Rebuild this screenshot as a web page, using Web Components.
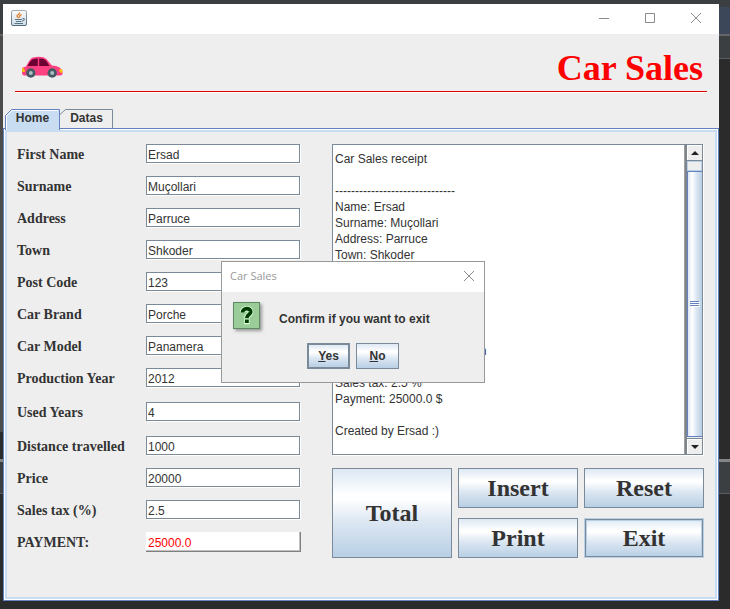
<!DOCTYPE html>
<html lang="en">
<head>
<meta charset="utf-8">
<title>Car Sales</title>
<style>
html,body{margin:0;height:100%}
body{background:#2b2b2b;font-family:"Liberation Sans",Arial,sans-serif;font-size:12px;color:#333}
</style>
</head>
<body>
<car-desktop></car-desktop>
<script>
const define=(name,html,init)=>customElements.define(name,class extends HTMLElement{
  constructor(){
    super();
    this.attachShadow({mode:'open'}).innerHTML='<style>*,:host{box-sizing:border-box}</style>'+html;
  }
  connectedCallback(){ if(init&&!this.ready){this.ready=true;init(this,this.shadowRoot)} }
});

define('form-field',`
<style>
:host{display:grid;grid-template-columns:129px minmax(0,1fr);align-items:start;height:20px}
label{font:bold 14px/22px "Liberation Serif","Times New Roman",serif;color:#333;white-space:nowrap}
input{width:100%;height:19px;margin:0;padding:2px 1px 0;border:1px solid #7a8a99;border-radius:0;outline:0;background:#fff;color:#333;font:12px/14px "Liberation Sans",Arial,sans-serif;box-shadow:1px 1px #fff}
:host([raised]) input{height:20px;color:#f00;border-width:0 1px 1px 0;border-color:#808080;padding:2px 2px 0;box-shadow:inset -1px -1px #c0c0c0}
</style>
<label for="i"></label><input id="i" type="text">`,(h,r)=>{
  r.querySelector('label').textContent=h.getAttribute('label');
  r.querySelector('input').value=h.getAttribute('value');
});

define('metal-button',`
<style>
:host{display:block}
button{width:100%;height:100%;margin:0;padding:0;border:1px solid #7a8a99;border-radius:0;background:linear-gradient(#dde8f3 0,#fff 30%,#fff 34%,#dce7f2 60%,#b8cfe5 100%);color:#333;font:bold 24px/30px "Liberation Serif","Times New Roman",serif}
:host([focused]) button{border:1px solid #b8cfe5;box-shadow:inset 0 0 0 1px #7a8a99,inset 0 0 0 2px #b8cfe5}
:host([small]) button{font:bold 12px/14px "Liberation Sans",Arial,sans-serif}
:host([small][default]) button{border-width:2px}
</style>
<button type="button"><slot></slot></button>`);

define('title-bar',`
<style>
:host{display:flex;align-items:center;justify-content:space-between;height:30px;flex:none;background:#fff;padding:0 15px 2px 8px}
.c{display:flex;gap:30px}
button{border:0;padding:0;margin:0;background:none;width:16px;height:16px}
svg{display:block}
.c svg{fill:none;stroke:#8b8b8b}
</style>
<svg width="16" height="16" viewBox="0 0 16 16" aria-hidden="true">
<defs><linearGradient id="g" x2="0" y2="1"><stop stop-color="#fafafa"/><stop offset="1" stop-color="#cfdde5"/></linearGradient><linearGradient id="b" x2="0" y2="1"><stop stop-color="#a2adb4"/><stop offset="1" stop-color="#506a7d"/></linearGradient></defs>
<rect x=".5" y=".5" width="15" height="15" rx="1.5" fill="url(#g)" stroke="url(#b)"/>
<path d="M8.500 2.500c1 1.600-2.500 2-2.500 3.500 0 1 1.200 1.200 1.400 2.200M10.500 4.500C7.500 6 8.500 6.500 8.800 7.700" fill="none" stroke="#e57b25" stroke-width="1.300"/>
<path d="M4 9.500h7M5 11.500h5.500M11.500 8.500c2.500-.4 2.500 2.200-.5 2.500M3.500 13.500h8.500" fill="none" stroke="#577387" stroke-width="1.100"/>
</svg>
<div class="c">
<button type="button" aria-label="Minimize"><svg width="16" height="16"><path d="M3 8.500h10"/></svg></button>
<button type="button" aria-label="Maximize"><svg width="16" height="16"><path d="M3.500 3.500h9v9h-9z"/></svg></button>
<button type="button" aria-label="Close"><svg width="16" height="16"><path d="M3 3l10 10M13 3L3 13"/></svg></button>
</div>`);

define('app-header',`
<style>
:host{display:block;flex:none;padding:8px 12px 0 12px}
div{display:flex;justify-content:space-between;align-items:center;height:49px;padding:0 4px 0 6px}
h1{margin:0;padding-top:4px;font:bold 36px/49px "Liberation Serif","Times New Roman",serif;color:#f00}
hr{margin:0;border:0;height:2px;background:linear-gradient(#e00000 50%,#fff 50%)}
svg{display:block}
</style>
<div>
<svg width="42" height="42" viewBox="0 3 42 42" role="img" aria-label="Car">
<path d="M5 23.500C7 20 9 15.500 12 14.500Q18 12.800 23 14.500C26.500 16 28.500 20 31 22.500Q40 23 41.500 28.500V31Q41 32.500 39 32.500H3Q1 32.500 1 29V25Q2 24 5 23.500Z" fill="#ff4081"/>
<path d="M6.500 23C8.500 19 10.500 16.200 13.500 15.700L16.800 15.400V23ZM18.200 15.400Q22 15.400 24 16.800C26 18.200 27 20.600 28.500 23H18.200Z" fill="#6d0032"/>
<path d="M1.200 25H2.500Q4 26 4 29H1.200ZM41.200 26.500Q38.300 25 38 27.500 38.300 29.800 41.200 30.200Z" fill="#ffc107"/>
<g fill="#455a64"><circle cx="9.800" cy="30" r="4.700"/><circle cx="31.200" cy="30" r="4.700"/></g>
<g fill="#b0bec5"><circle cx="9.800" cy="30" r="2"/><circle cx="31.200" cy="30" r="2"/></g>
</svg>
<h1>Car Sales</h1>
</div><hr>`);

define('tab-strip',`
<style>
:host{display:flex;flex:none;height:19px;padding-left:2px;position:relative}
button{display:block;position:relative;height:19px;padding:0;border:0;background:none;font:bold 12px/19px "Liberation Sans",Arial,sans-serif;color:#333}
svg{position:absolute;inset:0;width:100%;height:100%}
span{position:relative}
.h{width:55px;height:21px;padding-bottom:2px}.d{width:53px}
</style>
<button class="h" type="button" role="tab" aria-selected="true"><svg viewBox="0 0 55 21"><path d="M.5 21V6.500L6.500.5H54.500V21" fill="#c8ddf2" stroke="#6382bf"/><path d="M1.500 21V7L7 1.500H53" fill="none" stroke="#fff"/></svg><span>Home</span></button>
<button class="d" type="button" role="tab" aria-selected="false"><svg viewBox="0 0 53 19"><path d="M0 5.500L5.500.5H52.500V19" fill="none" stroke="#7a8a99"/></svg><span>Datas</span></button>`);

define('receipt-area',`
<style>
:host{display:grid;grid-template-columns:minmax(0,1fr) 17px;height:311px;border:1px solid #7a8a99;box-shadow:1px 1px #fff;background:#fff}
pre{margin:0;padding:6px 0 6px 2px;overflow:hidden;font:12px/16px "Liberation Sans",Arial,sans-serif;color:#333;border-right:1px solid #a0a0a0}
.s{display:flex;flex-direction:column;border-left:2px solid #7f858c;background:#eee;min-height:0}
button{flex:none;height:16px;padding:0;border:0;border-bottom:1px solid #7a8a99;background:#eee;box-shadow:inset 1px 1px #fff}
button.e{border-bottom:0;border-top:1px solid #7a8a99;margin-top:1px}
.s svg{display:block;margin:auto}
.g{height:10px;flex:none;border:1px solid #b8cfe5}
.t{flex:1;border:1px solid #6382bf;border-right:0;background:linear-gradient(90deg,#dde8f3,#fff 30%,#dce7f2 60%,#b8cfe5);display:flex;align-items:center}
</style>
<pre><slot></slot></pre>
<div class="s"><button type="button" aria-label="Scroll up"><svg width="8" height="4"><path d="M0 4h8L4 0z" fill="#222"/></svg></button><div class="g"></div><div class="t"><svg width="10" height="6" shape-rendering="crispEdges"><path d="M0 .5h9M0 2.500h9M0 4.500h9" stroke="#6382bf"/><path d="M1 1.500h9M1 3.500h9M1 5.500h9" stroke="#fff"/></svg></div><button class="e" type="button" aria-label="Scroll down"><svg width="8" height="4"><path d="M0 0h8L4 4z" fill="#222"/></svg></button></div>`);

define('exit-dialog',`
<style>
:host{display:block;position:absolute;left:50%;top:50%;width:264px;border:1px solid #999;background:#eee;margin:-42px 0 0 -140px}
header{display:flex;justify-content:space-between;align-items:center;height:30px;padding:0 9px 2px 8px;background:#fff;font:11px/16px "Open Sans","Noto Sans",sans-serif;color:#999}
header button{border:0;padding:0;background:none;height:12px}
header svg{display:block;fill:none;stroke:#8b8b8b}
.m{display:flex;padding:10px 10px 0 11px;gap:19px;height:51px}
.m i{flex:none;width:27px;height:27px;border:1px solid #5c8a63;background:#99cc99;box-shadow:2px 2px 3px #999}
.m i svg{display:block}
p{margin:0;padding-top:10px;font:bold 12px/14px "Liberation Sans",Arial,sans-serif;color:#333;white-space:nowrap}
.b{display:flex;justify-content:center;gap:6px;height:39px;padding-bottom:13px}
metal-button{width:43px}
</style>
<header><span>Car Sales</span><button type="button" aria-label="Close"><svg width="12" height="12"><path d="M1 1l10 10M11 1L1 11"/></svg></button></header>
<div class="m"><i><svg width="25" height="25" viewBox="0 0 25 25" fill="none"><g stroke="#ddffdd" stroke-width="5.500"><path d="M8.500 9.500C8.500 4.500 17 4.500 16.700 9 16.300 12.200 12.800 11.500 12.800 15M10 18.500h5.500"/></g><path d="M8.500 9.500C8.500 4.500 17 4.500 16.700 9 16.300 12.200 12.800 11.500 12.800 15" stroke="#003c00" stroke-width="3.800"/><path d="M10.900 16.500h3.900v3.500h-3.900z" fill="#003c00"/></svg></i><p>Confirm if you want to exit</p></div>
<div class="b"><metal-button small default><u>Y</u>es</metal-button><metal-button small><u>N</u>o</metal-button></div>`);

define('car-desktop',`
<style>
:host{display:block;height:100%;min-height:609px;padding:4px 11px 8px 3px;background:
 linear-gradient(#3c4759,#3c4759) right 7px/11px 27px no-repeat,
 linear-gradient(#4b4b4b,#4b4b4b) 0 36px/3px 396px no-repeat,
 linear-gradient(#3c3f41 0 34px,#646668 34px 36px,#3c3f41 36px 58px,#5b5e60 58px 59px,#2b2b2b 59px 459px,#858585 459px 462px,#3c3f41 462px 493px,#5b5e60 493px 494px,#2b2b2b 494px)}
:host{display:grid}
main{display:flex;flex-direction:column;min-width:0;position:relative;background:#eee}
.panel{flex:1;display:grid;grid-template-columns:minmax(0,283fr) minmax(0,372fr);column-gap:32px;align-items:start;border:1px solid #6382bf;box-shadow:inset 0 0 0 1px #fff,inset 0 0 0 3px #c8ddf2;padding:15px 14px 10px 13px}
form{display:grid;row-gap:12px}
.low{margin-top:2px}
[raised]{margin-right:-1px}
.right{display:grid;row-gap:13px}
receipt-area{margin-right:1px}
.b{display:grid;grid-template-columns:repeat(3,minmax(0,1fr));grid-template-rows:40px 40px;gap:10px 6px}
.tall{grid-row:span 2}
tab-strip{margin-top:16px;z-index:1}
</style>
<main>
<title-bar></title-bar>
<app-header></app-header>
<tab-strip></tab-strip>
<section class="panel">
<form>
<form-field label="First Name" value="Ersad"></form-field>
<form-field label="Surname" value="Muçollari"></form-field>
<form-field label="Address" value="Parruce"></form-field>
<form-field label="Town" value="Shkoder"></form-field>
<form-field label="Post Code" value="123"></form-field>
<form-field label="Car Brand" value="Porche"></form-field>
<form-field label="Car Model" value="Panamera"></form-field>
<form-field label="Production Year" value="2012"></form-field>
<form-field class="low" label="Used Years" value="4"></form-field>
<form-field class="low" label="Distance travelled" value="1000"></form-field>
<form-field label="Price" value="20000"></form-field>
<form-field label="Sales tax (%)" value="2.5"></form-field>
<form-field raised label="PAYMENT:" value="25000.0"></form-field>
</form>
<div class="right">
<receipt-area>Car Sales receipt

------------------------------
Name: Ersad
Surname: Muçollari
Address: Parruce
Town: Shkoder
Post Code: 123
Car Brand: Porche
Car Model: Panamera
Production Year: 2012
Used Years: 4
Distance travelled: 1000  km
Price: 20000 $
Sales tax: 2.5 %
Payment: 25000.0 $

Created by Ersad :)</receipt-area>
<div class="b">
<metal-button class="tall">Total</metal-button><metal-button>Insert</metal-button><metal-button>Reset</metal-button><metal-button>Print</metal-button><metal-button focused>Exit</metal-button>
</div>
</div>
</section>
<exit-dialog></exit-dialog>
</main>`);
</script>
</body>
</html>
